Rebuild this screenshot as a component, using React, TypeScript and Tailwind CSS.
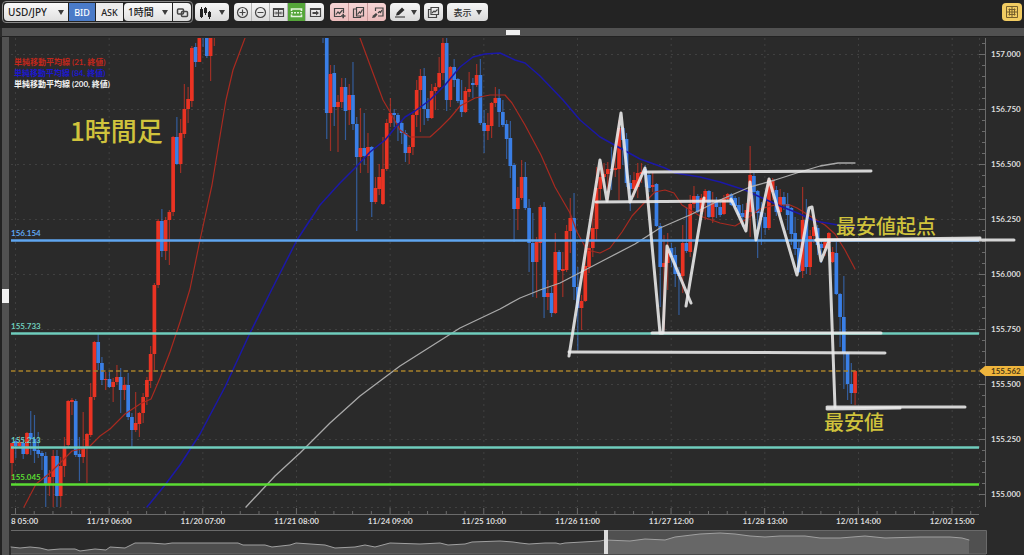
import React, { useState } from 'react';

type Candle = [dir: string, top: number, bottom: number, high: number, low: number];
type LineProps = { points: string; color: string; width?: number; opacity?: number };

const UP = '#ea3323';
const DOWN = '#3a7fe6';
const STEP = 3.747;

// u = up, d = down; body top, body bottom, wick high, wick low (chart units)
const candlesLeft: Candle[] = [
  ['u', 443, 463, 443, 480], ['d', 441, 446, 438, 458], ['u', 442, 446, 436, 448], ['d', 443, 454, 437, 459],
  ['u', 433, 454, 432, 455], ['d', 433, 439, 411, 455], ['d', 439, 451, 415, 463], ['d', 450, 454, 432, 458],
  ['d', 453, 456, 451, 470], ['d', 456, 484, 452, 507], ['u', 477, 484, 470, 496], ['u', 456, 477, 450, 507],
  ['d', 456, 496, 450, 507], ['u', 466, 496, 457, 507], ['u', 447, 466, 437, 477], ['u', 401, 445, 400, 447],
  ['u', 400, 402, 398, 415], ['d', 401, 455, 399, 457], ['d', 454, 457, 437, 481], ['u', 448, 457, 412, 463],
  ['u', 434, 448, 433, 483], ['u', 397, 435, 383, 437], ['u', 342, 397, 341, 400], ['d', 342, 363, 334, 370],
  ['d', 363, 380, 357, 385], ['u', 379, 380, 372, 390], ['d', 379, 387, 372, 388], ['u', 382, 387, 378, 402],
  ['u', 377, 382, 365, 385], ['d', 377, 390, 368, 413], ['u', 385, 390, 377, 400], ['d', 385, 417, 373, 420],
  ['d', 417, 430, 413, 447], ['u', 423, 430, 392, 432], ['u', 413, 424, 412, 437], ['u', 397, 413, 393, 423],
  ['u', 380, 397, 377, 405], ['u', 354, 381, 346, 388], ['u', 285, 354, 283, 370], ['u', 221, 285, 219, 288],
  ['d', 221, 251, 209, 257], ['u', 220, 251, 217, 260], ['u', 212, 220, 210, 265], ['u', 137, 212, 136, 216],
  ['d', 137, 164, 117, 165], ['u', 133, 164, 119, 173], ['u', 109, 134, 84, 138], ['u', 99, 109, 87, 123],
  ['u', 48, 101, 46, 107], ['d', 47, 62, 43, 67], ['u', 37, 62, 37, 62], ['d', 37, 38, 37, 47],
  ['d', 37, 56, 37, 58], ['u', 37, 56, 37, 81], ['u', 37, 38, 37, 46],
];

const candlesRight: Candle[] = [
  ['d', 37, 38, 37, 43], ['d', 37, 113, 37, 139], ['u', 74, 113, 65, 151], ['d', 73, 107, 65, 126],
  ['u', 102, 107, 95, 152], ['u', 87, 102, 78, 108], ['d', 87, 111, 78, 140], ['u', 95, 110, 84, 125],
  ['d', 95, 124, 62, 130], ['d', 124, 157, 117, 231], ['u', 148, 157, 108, 173], ['d', 148, 156, 113, 165],
  ['u', 147, 156, 133, 173], ['d', 147, 202, 146, 217], ['u', 188, 202, 177, 204], ['u', 177, 189, 164, 195],
  ['u', 169, 204, 137, 205], ['u', 123, 169, 119, 171], ['u', 113, 123, 98, 127], ['d', 113, 115, 109, 127],
  ['d', 115, 123, 113, 141], ['d', 123, 133, 120, 144], ['d', 133, 153, 130, 162], ['u', 147, 153, 145, 164],
  ['u', 115, 147, 113, 155], ['u', 90, 115, 80, 127], ['u', 76, 90, 69, 132], ['d', 76, 109, 68, 125],
  ['d', 109, 118, 98, 121], ['u', 91, 118, 84, 119], ['u', 87, 91, 83, 110], ['u', 73, 87, 57, 88],
  ['u', 43, 73, 37, 80], ['d', 43, 100, 37, 111], ['u', 67, 100, 66, 107], ['d', 67, 80, 59, 87],
  ['d', 79, 101, 78, 103], ['d', 100, 112, 80, 117], ['u', 91, 112, 87, 113], ['u', 89, 92, 72, 97],
  ['d', 83, 85, 78, 98], ['u', 75, 85, 64, 87], ['d', 75, 123, 59, 125], ['d', 123, 131, 110, 153],
  ['u', 125, 131, 113, 140], ['u', 103, 126, 102, 138], ['u', 98, 103, 87, 107], ['d', 98, 112, 89, 127],
  ['d', 112, 125, 100, 127], ['d', 124, 139, 120, 159], ['d', 138, 166, 121, 178], ['d', 165, 209, 163, 242],
  ['u', 198, 209, 187, 230], ['u', 177, 198, 160, 200], ['d', 177, 208, 162, 210], ['d', 208, 243, 199, 272],
  ['d', 243, 262, 213, 297], ['u', 242, 262, 237, 298], ['u', 207, 243, 205, 260], ['d', 207, 297, 202, 318],
  ['u', 293, 297, 280, 310], ['d', 293, 313, 287, 317], ['u', 252, 313, 233, 314], ['d', 252, 270, 250, 272],
  ['u', 269, 271, 252, 297], ['u', 231, 270, 225, 272], ['u', 218, 231, 198, 253], ['d', 218, 287, 193, 300],
  ['d', 287, 308, 267, 350], ['u', 301, 308, 295, 330], ['u', 266, 301, 247, 302], ['u', 248, 267, 233, 273],
  ['u', 228, 248, 207, 257], ['u', 188, 229, 167, 240], ['u', 177, 189, 163, 200], ['u', 174, 177, 163, 183],
  ['u', 169, 174, 162, 200], ['d', 169, 170, 147, 190], ['u', 168, 170, 147, 177], ['u', 128, 169, 120, 200],
  ['d', 128, 140, 127, 165], ['d', 139, 183, 133, 187], ['d', 183, 189, 175, 211], ['u', 180, 189, 172, 197],
  ['u', 173, 187, 163, 198], ['u', 172, 174, 163, 183], ['d', 169, 175, 165, 187], ['d', 175, 188, 172, 192],
  ['u', 185, 187, 172, 192], ['d', 184, 226, 183, 227], ['d', 226, 267, 223, 307], ['u', 263, 267, 235, 330],
  ['u', 250, 263, 233, 290], ['d', 248, 257, 243, 267], ['d', 255, 274, 247, 287], ['d', 273, 276, 267, 315],
  ['u', 243, 276, 225, 293], ['d', 243, 251, 207, 253], ['u', 204, 252, 195, 257], ['u', 196, 204, 186, 208],
  ['d', 196, 212, 194, 213], ['u', 198, 212, 194, 214], ['u', 191, 202, 189, 220], ['d', 191, 217, 190, 218],
  ['u', 203, 217, 192, 223], ['d', 202, 207, 197, 218], ['d', 207, 215, 202, 217], ['u', 198, 214, 195, 215],
  ['u', 194, 199, 193, 202], ['d', 194, 205, 193, 206], ['d', 198, 206, 196, 209], ['d', 205, 215, 197, 217],
  ['d', 213, 217, 204, 227], ['u', 210, 218, 203, 230], ['u', 175, 212, 146, 237], ['d', 176, 192, 173, 218],
  ['d', 191, 213, 190, 258], ['d', 212, 217, 202, 245], ['d', 217, 228, 213, 235], ['u', 180, 228, 178, 230],
  ['u', 180, 192, 178, 200], ['d', 190, 212, 186, 216], ['u', 197, 212, 189, 217], ['d', 197, 205, 192, 210],
  ['d', 204, 215, 193, 230], ['d', 208, 234, 207, 245], ['d', 233, 249, 217, 255], ['d', 248, 272, 242, 273],
  ['u', 220, 271, 187, 278], ['d', 220, 267, 199, 274], ['u', 236, 267, 230, 275], ['u', 227, 236, 217, 243],
  ['d', 228, 245, 225, 255], ['d', 244, 248, 240, 263], ['u', 242, 248, 238, 256], ['u', 233, 243, 232, 250],
  ['u', 252, 262, 247, 263], ['d', 253, 294, 242, 295], ['d', 294, 317, 293, 347], ['d', 317, 353, 276, 389],
  ['d', 353, 384, 352, 400], ['d', 384, 393, 363, 404], ['u', 371, 393, 370, 405],
];

const sma21a =
  '24,507 36,484 50,473 60,463 72,451 82,449 90,446 100,436 110,429 125,414 140,404 151,399 160,378 170,352 180,322 190,289 200,240 212,185 221,130 226,100 233,70 245,38';
const sma21b =
  '360,38 370,65 383,100 390,112 400,130 410,137 430,137 440,128 450,118 460,106 475,98 490,95 505,95 512,103 525,125 533,140 541,155 555,187 570,213 577,232 587,250 600,253 610,248 622,232 632,216 645,202 655,192 665,190 674,193 682,205 700,216 720,223 735,226 745,220 760,209 775,205 790,205 797,208 810,216 825,225 835,234 845,250 855,269';
const sma84 =
  '147,507 165,485 180,465 200,434 225,387 250,333 272,289 297,240 320,205 340,183 355,168 370,152 385,140 395,128 405,117 415,111 430,100 445,85 460,67 473,57 485,54 500,53 515,60 525,63 540,76 563,100 580,120 600,137 620,148 640,159 665,168 675,173 700,177 720,182 745,190 760,197 780,206 800,214 815,221 838,225 855,228';
const sma200 =
  '246,507 275,476 300,453 330,423 360,396 400,366 430,347 460,328 500,309 520,298 540,290 560,283 585,270 610,257 635,244 660,228 690,215 720,200 750,187 775,180 800,172 820,166 838,163 855,163';

const drawings = [
  '569,356 600,160 607,201 621,113 630,202 645,168 660,333 663,333 667,246 691,303',
  '686,306 704,198',
  '731,199 746,231 750,182 756,240 769,179 797,275 809,208 812,207 821,261 829,241 835,407',
  '645,172 871,171',
  '596,202 732,201',
  '652,333 881,333',
  '569,352 885,353',
  '816,240 980,238',
  '816,240 1014,240',
  '827,407 965,407',
  '827,409 900,408',
];

const levels = [
  { price: '156.154', y: 240, color: '#5fa6f0' },
  { price: '155.733', y: 333, color: '#6fcdbd' },
  { price: '155.213', y: 447, color: '#6fcdbd' },
  { price: '155.045', y: 484, color: '#5bdc33' },
];

const prices = ['157.000', '156.750', '156.500', '156.250', '156.000', '155.750', '155.500', '155.250', '155.000'];
const times = [
  '8 05:00', '11/19 06:00', '11/20 07:00', '11/21 08:00', '11/24 09:00', '11/25 10:00',
  '11/26 11:00', '11/27 12:00', '11/28 13:00', '12/01 14:00', '12/02 15:00',
];
const timeX = (i: number) => 15.5 + i * 93.67;

const navPoints =
  '11,547 20,548 30,547 40,548 48,550 60,549 75,549 80,551 95,549 106,550 110,547 125,548 135,543 150,543 165,544 172,543 200,543 238,543 243,545 265,545 272,547 290,545 296,543 325,545 335,548 355,547 365,545 375,547 390,543 420,544 440,543 448,545 465,544 472,542 500,541 513,542 520,543 529,544 545,543 556,543 560,544 565,543 600,541 605,540 630,541 645,539 665,540 675,537 700,534 720,533 735,534 750,536 765,537 780,536 805,536 820,538 840,538 865,536 885,538 920,537 950,537 962,538 969,540';

const Candles = ({ data, start }: { data: Candle[]; start: number }) => (
  <g>
    {data.map(([dir, top, bottom, high, low], i) => {
      const x = 12 + (start + i) * STEP;
      const color = dir === 'u' ? UP : DOWN;
      return (
        <g key={i} fill={color}>
          <rect x={x - 0.6} y={high} width={1.2} height={low - high} opacity={0.6} />
          <rect x={x - 1.85} y={top} width={3.7} height={bottom - top} />
        </g>
      );
    })}
  </g>
);

const Line = ({ points, color, width = 1, opacity = 1 }: LineProps) => (
  <polyline
    points={points}
    fill="none"
    stroke={color}
    strokeWidth={width}
    opacity={opacity}
    strokeLinecap="round"
    strokeLinejoin="round"
  />
);

const Chart = () => (
  <svg viewBox="9 37 1015 492" className="block w-full h-auto" role="img" aria-label="USD/JPY 1時間">
    <defs>
      <clipPath id="plot">
        <rect x="10" y="38" width="970" height="470" />
      </clipPath>
    </defs>
    <g stroke="#404040" strokeDasharray="2 4">
      {prices.map((p, i) => (
        <line key={p} x1="11" x2="979" y1={54.5 + i * 55} y2={54.5 + i * 55} />
      ))}
      {times.map((t, i) => (
        <line key={t} x1={timeX(i)} x2={timeX(i)} y1="38" y2="507" />
      ))}
      <line x1="979.5" x2="979.5" y1="38" y2="507" />
      <line x1="11" x2="979" y1="507.5" y2="507.5" />
    </g>

    <g className="font-[Lato,'Noto_Sans_CJK_JP',sans-serif] text-[8px] font-bold">
      <text x="14" y="65" fill="#c0271c">単純移動平均線 (21, 終値)</text>
      <text x="14" y="76" fill="#1c18cc">単純移動平均線 (84, 終値)</text>
      <text x="14" y="87" fill="#f2f2f2">単純移動平均線 (200, 終値)</text>
    </g>

    <g clipPath="url(#plot)">
      <Candles data={candlesLeft} start={0} />
      <Candles data={candlesRight} start={83} />
      <Line points={sma21a} color="#a82a20" width={1.2} />
      <Line points={sma21b} color="#a82a20" width={1.2} />
      <Line points={sma84} color="#1b18a8" width={1.5} />
      <Line points={sma200} color="#a9a9a9" width={1.3} />
      <line x1="11" x2="979" y1="371" y2="371" stroke="#a8812a" strokeWidth="1.4" strokeDasharray="4.5 3" />
    </g>

    <g className="font-[Lato,sans-serif] text-[8px] font-bold">
      {levels.map((l) => (
        <g key={l.price}>
          <line x1="11" x2="979" y1={l.y + 0.5} y2={l.y + 0.5} stroke={l.color} strokeWidth="2.4" />
          <text x="11" y={l.y - 4} fill={l.color}>{l.price}</text>
        </g>
      ))}
    </g>

    <g stroke="#6b6b6b">
      <line x1="985.5" x2="985.5" y1="38" y2="507" />
      {Array.from({ length: 42 }, (_, i) => (
        <line key={i} x1={(i + 4) % 5 === 0 ? 979 : 982} x2="985" y1={43.5 + i * 11} y2={43.5 + i * 11} />
      ))}
      <line x1="11" x2="979" y1="514.5" y2="514.5" />
      {Array.from({ length: 52 }, (_, i) => (
        <line key={i} x1={15.5 + i * 18.73} x2={15.5 + i * 18.73} y1={i % 5 === 0 ? 508 : 511} y2="514" />
      ))}
    </g>
    <g className="font-[Lato,sans-serif] text-[8px] font-bold" fill="#dcdcdc">
      {prices.map((p, i) => (
        <text key={p} x="991" y={57 + i * 55}>{p}</text>
      ))}
      {times.map((t, i) => (
        <text key={t} x={i === 0 ? 11 : timeX(i)} y="524" textAnchor={i === 0 ? 'start' : 'middle'}>{t}</text>
      ))}
    </g>

    <path d="M979 371 L985 366 H1024 V376 H985 Z" fill="#efb53c" />
    <text x="991" y="374" fill="#4a3a18" className="font-[Lato,sans-serif] text-[8px] font-bold">155.562</text>

    {drawings.map((d) => (
      <Line key={d} points={d} color="#ececec" width={3} opacity={0.88} />
    ))}

    <g fill="#d0c33c" className="font-['Noto_Sans_CJK_JP',sans-serif] font-medium">
      <text x="70" y="141" className="text-[26px]">1時間足</text>
      <text x="836" y="234" className="text-[20px]">最安値起点</text>
      <text x="824" y="430" className="text-[20px]">最安値</text>
    </g>
  </svg>
);

const Navigator = () => (
  <svg viewBox="9 529 1015 26" className="block w-full h-auto" role="img" aria-label="期間">
    <rect x="606" y="530" width="380" height="24" fill="#505050" />
    <polygon points={`11,554 ${navPoints} 969,554`} fill="#4d4d4d" />
    <clipPath id="range">
      <rect x="606" y="529" width="380" height="26" />
    </clipPath>
    <polygon points={`11,554 ${navPoints} 969,554`} fill="#676767" clipPath="url(#range)" />
    <Line points={navPoints} color="#a0a0a0" />
    <path d="M11 530.5 H986.5 V554 M11 554 H986" fill="none" stroke="#6a6a6a" />
    <rect x="604" y="530" width="4" height="24" fill="#dcdcdc" />
  </svg>
);

const Arrow = () => (
  <svg width="6" height="5" viewBox="0 0 6 5" fill="#3c3c3c" aria-hidden="true">
    <path d="M0 0 H6 L3 5 Z" />
  </svg>
);

const btn = 'flex items-center justify-center h-[18px] bg-linear-to-b from-[#f6f6f6] to-[#dadada] text-[#333]';

const Picker = ({ label, options, className }: { label: string; options: string[]; className: string }) => (
  <span className={`relative flex items-center ${className}`}>
    <select
      aria-label={label}
      className="appearance-none w-full h-[18px] pl-1 rounded-l-sm bg-linear-to-b from-[#fafafa] to-[#e0e0e0] text-[#222] text-[10px] leading-[18px] font-medium"
    >
      {options.map((o) => (
        <option key={o}>{o}</option>
      ))}
    </select>
    <span className="absolute right-1 pointer-events-none">
      <Arrow />
    </span>
  </span>
);

const Icon = ({ children }: { children: React.ReactNode }) => (
  <svg width="13" height="13" viewBox="0 0 13 13" fill="none" stroke="#454545" strokeWidth="1.2" aria-hidden="true">
    {children}
  </svg>
);

const zoomTools = [
  { label: '拡大', icon: <><circle cx="6.5" cy="6.5" r="5" /><path d="M3.5 6.5 H9.5 M6.5 3.5 V9.5" /></> },
  { label: '縮小', icon: <><circle cx="6.5" cy="6.5" r="5" /><path d="M3.5 6.5 H9.5" /></> },
  { label: '幅を合わせる', icon: <><path d="M1.5 2.5 H11.5 V10.5 H1.5 Z M6.5 4 V10.5 M2.5 7 H5.5 M7.5 7 H10.5" /><path d="M1 3 H12" strokeWidth="2" /><path d="M4 5.5 L5.5 7 L4 8.5 M9 5.5 L7.5 7 L9 8.5" strokeWidth="0.8" /></> },
  { label: '自動スケール', icon: <><path d="M1.5 5 V3 H11.5 V5 M1.5 8.5 V10.5 H11.5 V8.5" stroke="#e4f4dd" strokeWidth="1.6" /><path d="M1 6.7 H12" stroke="#e4f4dd" strokeDasharray="2 1" strokeWidth="1.6" /></> },
  { label: '最新へ', icon: <><path d="M1.5 2.5 H11.5 V10.5 H1.5 Z" /><path d="M1 3 H12" strokeWidth="2" /><path d="M3.5 7 H8" strokeWidth="2" /><path d="M7 4.5 L10 7 L7 9.5 Z" fill="#454545" stroke="none" /></> },
];

const chartTools = [
  { label: 'テクニカル追加', icon: <><path d="M8 10.5 H1.5 V2.5 H10.5 V7" /><path d="M3 8.5 L5 6 L6.5 7.5 L9.5 4" /><path d="M8 10 H12.5 M10.2 7.8 V12.3" strokeWidth="1.6" /></> },
  { label: 'テクニカル複製', icon: <><path d="M4.5 1.5 H11.5 V10 H4.5 Z" /><path d="M4.5 3 H1.5 V11.5 H8.5 V10" /><path d="M5.5 8.5 L7.5 6 L8.5 7 L10.5 3.5" /></> },
  { label: 'テクニカル設定', icon: <><path d="M4.5 5 V2 H12 V10 H7" /><path d="M7 7 L8.5 5.5 L9.5 6.5 L11 4" /><path d="M1 12 L2 9.5 L5 7 L6.5 8.5 L4 11.5 Z" fill="#454545" stroke="none" /></> },
];

export default function App() {
  const [side, setSide] = useState('BID');

  return (
    <div className="min-w-[500px] bg-[#2a2a2a] font-['Noto_Sans','Noto_Sans_CJK_JP',sans-serif]">
      <header className="flex items-center gap-1 h-7 pb-1 px-0.5 bg-[#232323]">
        <div className="flex items-center gap-px p-px border border-[#8a8a8a] rounded-sm">
          <Picker label="通貨ペア" options={['USD/JPY']} className="w-16" />
          {['BID', 'ASK'].map((s) => (
            <button
              key={s}
              onClick={() => setSide(s)}
              className={
                side === s
                  ? 'w-[26px] h-[18px] bg-[#4a7bc8] text-white text-[9px] leading-none font-medium'
                  : 'w-[27px] h-[18px] bg-[#ececec] text-[#222] text-[9px] leading-none font-medium'
              }
            >
              {s}
            </button>
          ))}
          <Picker label="足種" options={['1時間']} className="w-12" />
          <button aria-label="連動" className={`${btn} w-[18px] rounded-r-sm`}>
            <Icon>
              <rect x="1.5" y="3" width="6" height="5" rx="1" strokeWidth="1.5" />
              <rect x="5.5" y="5.5" width="6" height="5" rx="1" strokeWidth="1.5" />
            </Icon>
          </button>
        </div>

        <button aria-label="チャート種類" className={`${btn} w-[34px] gap-2 -ml-0.5 mr-px rounded-sm`}>
          <svg width="11" height="13" viewBox="0 0 11 13" fill="#222" aria-hidden="true">
            <path d="M0 3 H3 V11 H0 Z M1 1 H2 V12 H1 Z M4 2 H7 V7 H4 Z M5 1 H6 V9 H5 Z M8 6 H11 V11 H8 Z M9 5 H10 V13 H9 Z" />
          </svg>
          <Arrow />
        </button>

        <div className="flex divide-x divide-[#b5b5b5] rounded-sm overflow-hidden mr-0.5">
          {zoomTools.map((t, i) => (
            <button
              key={t.label}
              aria-label={t.label}
              className={
                i === 3
                  ? 'flex items-center justify-center w-[18px] h-[18px] bg-[#55a63a]'
                  : `${btn} w-[18px]`
              }
            >
              <Icon>{t.icon}</Icon>
            </button>
          ))}
        </div>

        <div className="flex gap-px rounded-sm overflow-hidden bg-[#c99a9a]">
          {chartTools.map((t) => (
            <button
              key={t.label}
              aria-label={t.label}
              className="flex items-center justify-center w-[18px] h-[18px] bg-linear-to-b from-[#f6d5d5] to-[#ecbcbc]"
            >
              <Icon>{t.icon}</Icon>
            </button>
          ))}
        </div>

        <button aria-label="描画" className={`${btn} w-[30px] gap-1 rounded-sm`}>
          <Icon>
            <path d="M2 9.5 L2.8 6.8 L8 1.5 L10.5 4 L5 9 Z" fill="#2d2d2d" stroke="none" />
            <path d="M1 11 H11" />
          </Icon>
          <Arrow />
        </button>

        <button aria-label="チャート保存" className={`${btn} w-[19px] rounded-sm`}>
          <Icon>
            <path d="M4 1.5 H11.5 V8.5 H4 Z M4 3.5 H1.5 V11.5 H9.5 V8.5" />
            <path d="M5 7 L7 5 L8 6 L10.5 3.5" />
          </Icon>
        </button>

        <button className={`${btn} w-[41px] gap-1 rounded-sm text-[9px] leading-none font-medium`}>
          表示
          <Arrow />
        </button>

        <button aria-label="レイアウト" className="flex items-center justify-center w-5 h-[18px] ml-auto rounded-sm bg-[#f2cc62]">
          <svg width="12" height="12" viewBox="0 0 12 12" fill="none" stroke="#77602c" aria-hidden="true">
            <path d="M0.5 0.5 H11.5 V11.5 H0.5 Z M6 0.5 V11.5 M0.5 6 H11.5 M2.5 3.5 H9.5 M2.5 8.5 H9.5 M3.5 2.5 V9.5 M8.5 2.5 V9.5" />
          </svg>
        </button>
      </header>

      <div className="flex items-center justify-center h-[9px] ml-0.5 border-b border-[#222] bg-[#515151]">
        <span className="w-3.5 h-[5px] bg-[#f0f0f0]" />
      </div>

      <main className="flex pl-0.5 bg-[#222]">
        <div className="flex items-center w-[7px] shrink-0 bg-[#515151]">
          <span className="w-[7px] h-3.5 bg-[#f0f0f0]" />
        </div>
        <div className="flex-1 min-w-0 bg-[#2a2a2a]">
          <Chart />
          <Navigator />
        </div>
      </main>
    </div>
  );
}
